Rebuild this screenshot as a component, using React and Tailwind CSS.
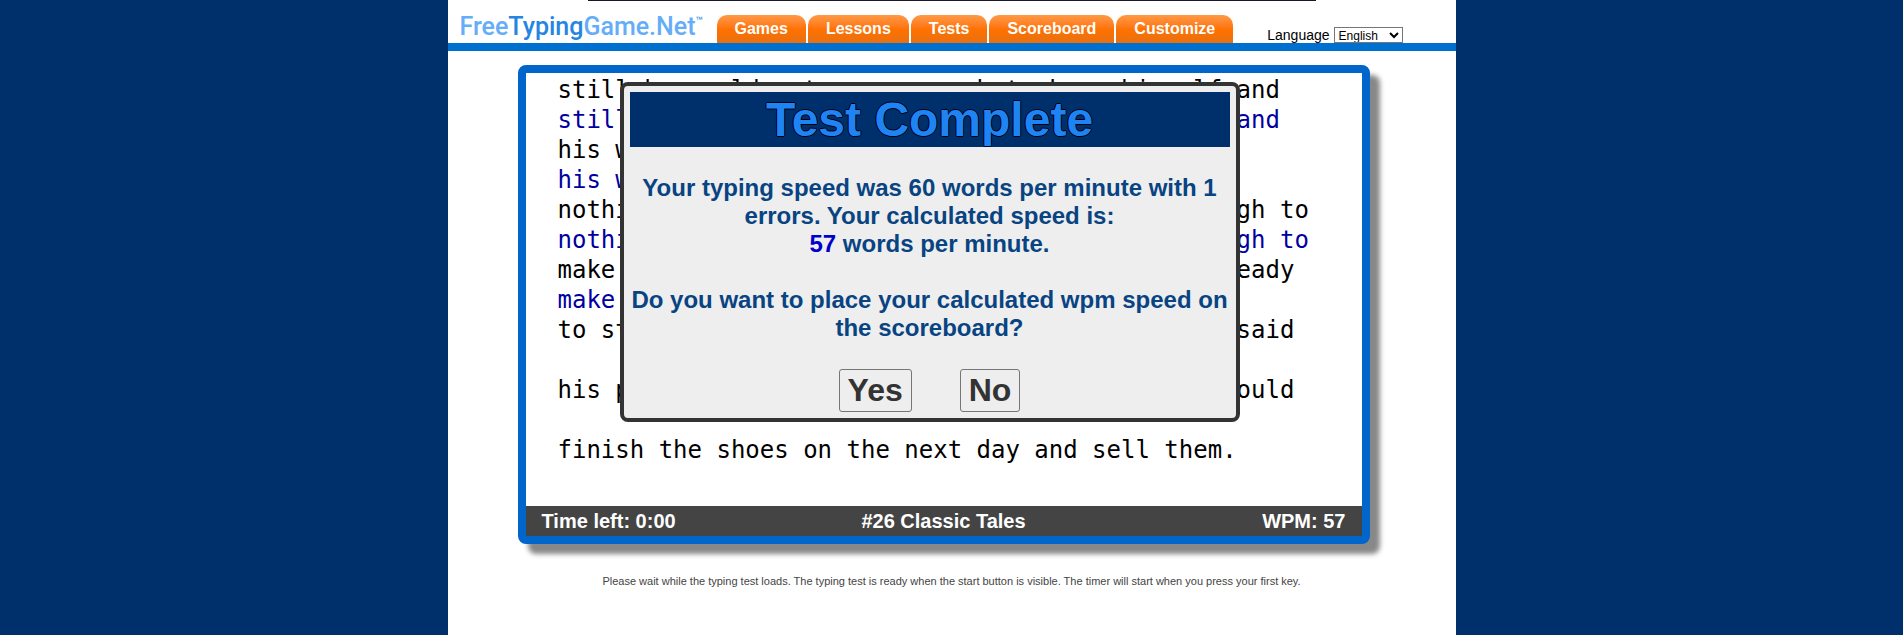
import { useState } from "react";

const navItems = ["Games", "Lessons", "Tests", "Scoreboard", "Customize"];

const storyLines = [
    { text: "still he could not earn enough to keep himself and", typed: false },
    { text: "still he could not earn enough to keep himself and", typed: true },
    { text: "his wife from going hungry. At last", typed: false },
    { text: "his wife from going hungry. At last", typed: true },
    { text: "nothing was left in the world save leather enough to", typed: false },
    { text: "nothing was left in the world save leather enough to", typed: true },
    { text: "make one pair of shoes. Then he cut them, all ready", typed: false },
    { text: "make one pair of shoes.", typed: true },
    { text: "to start early in the morning. Then he sat and said", typed: false },
    { text: "", typed: true },
    { text: "his prayers and fell asleep, trusting that he would", typed: false },
    { text: "", typed: true },
    { text: "finish the shoes on the next day and sell them.", typed: false },
];

const languages = ["English", "Español", "Français", "Deutsch"];

function Header() {
    const [language, setLanguage] = useState("English");

    return (
        <header className="border-b-8 border-[#0070d0]">
            <div className="mx-auto h-px max-w-[728px] bg-[#181828]" />
            <div className="flex h-[42px] items-end pl-3">
                <a
                    href="#"
                    className="flex w-[257px] items-start font-[Roboto,sans-serif] text-[25px] leading-8 font-medium text-[#66adf8]"
                >
                    Free<span className="text-[#2585e0]">Typing</span>Game.Net
                    <span className="text-xs leading-5 font-normal text-[#2585e0]">™</span>
                </a>
                <nav className="flex gap-0.5">
                    {navItems.map((item) => (
                        <a
                            key={item}
                            href="#"
                            className="h-7 rounded-t-[10px] bg-linear-to-b from-[#ff9a45] via-[#ff7200] to-[#e87010] px-[18px] text-base leading-7 font-bold text-white"
                        >
                            {item}
                        </a>
                    ))}
                </nav>
                <div className="ml-[34px] flex items-end gap-1">
                    <label htmlFor="language" className="text-sm leading-4 text-black">
                        Language
                    </label>
                    <select
                        id="language"
                        value={language}
                        onChange={(e) => setLanguage(e.target.value)}
                        className="h-4 border border-[#767676] bg-white text-xs leading-3 text-black"
                    >
                        {languages.map((name) => (
                            <option key={name}>{name}</option>
                        ))}
                    </select>
                </div>
            </div>
        </header>
    );
}

function ResultDialog({ onClose }) {
    return (
        <div
            role="dialog"
            aria-labelledby="result-title"
            className="absolute top-[9px] left-[94px] w-[620px] rounded-lg border-4 border-[#333333] bg-[#eeeeee] p-1.5 text-center text-2xl leading-7 font-bold text-[#084482]"
        >
            <h2
                id="result-title"
                className="mb-[27px] bg-[#00306b] text-5xl leading-[55px] text-[#1e84f4] [text-shadow:-1px_0_0_#001,1px_0_0_#001,0_-1px_0_#001,0_1px_0_#001]"
            >
                Test Complete
            </h2>
            <p>Your typing speed was 60 words per minute with 1 errors. Your calculated speed is:</p>
            <p className="mb-7">
                <span className="text-[#0000cc]">57</span> words per minute.
            </p>
            <p className="mb-[27px]">Do you want to place your calculated wpm speed on the scoreboard?</p>
            <div className="flex justify-center gap-12 text-[32px] leading-[41px] text-[#333333]">
                <button onClick={onClose} className="rounded-[3px] border border-[#767676] px-2">
                    Yes
                </button>
                <button onClick={onClose} className="rounded-[3px] border border-[#767676] px-2">
                    No
                </button>
            </div>
        </div>
    );
}

export default function App() {
    const [showResult, setShowResult] = useState(true);

    return (
        <div className="min-h-screen bg-[#00306b] font-['Liberation_Sans',Arial,sans-serif]">
            <div className="mx-auto min-h-screen w-full max-w-[1008px] bg-white">
                <Header />

                <main className="pt-3.5 pr-[86px] pl-[70px]">
                    {/* Typing area */}
                    <section className="relative rounded-lg border-8 border-[#0066cc] bg-white shadow-[10px_10px_5px_#888888]">
                        <div className="min-h-[433px] pt-0.5 pl-8 font-['DejaVu_Sans_Mono',monospace] text-2xl leading-[30px] whitespace-pre">
                            {storyLines.map((line, i) => (
                                <div key={i} className={`h-[30px] ${line.typed ? "text-[#0000a0]" : "text-black"}`}>
                                    {line.text}
                                </div>
                            ))}
                        </div>

                        {/* Status bar */}
                        <div className="grid grid-cols-3 bg-[#444444] px-4 text-xl leading-[30px] font-bold text-white">
                            <span>Time left: 0:00</span>
                            <span className="text-center">#26 Classic Tales</span>
                            <span className="text-right">WPM: 57</span>
                        </div>

                        {showResult && <ResultDialog onClose={() => setShowResult(false)} />}
                    </section>
                </main>

                <p className="mt-[27px] text-center text-[11px] leading-5 text-[#444444]">
                    Please wait while the typing test loads. The typing test is ready when the start button is visible. The
                    timer will start when you press your first key.
                </p>
            </div>
        </div>
    );
}
